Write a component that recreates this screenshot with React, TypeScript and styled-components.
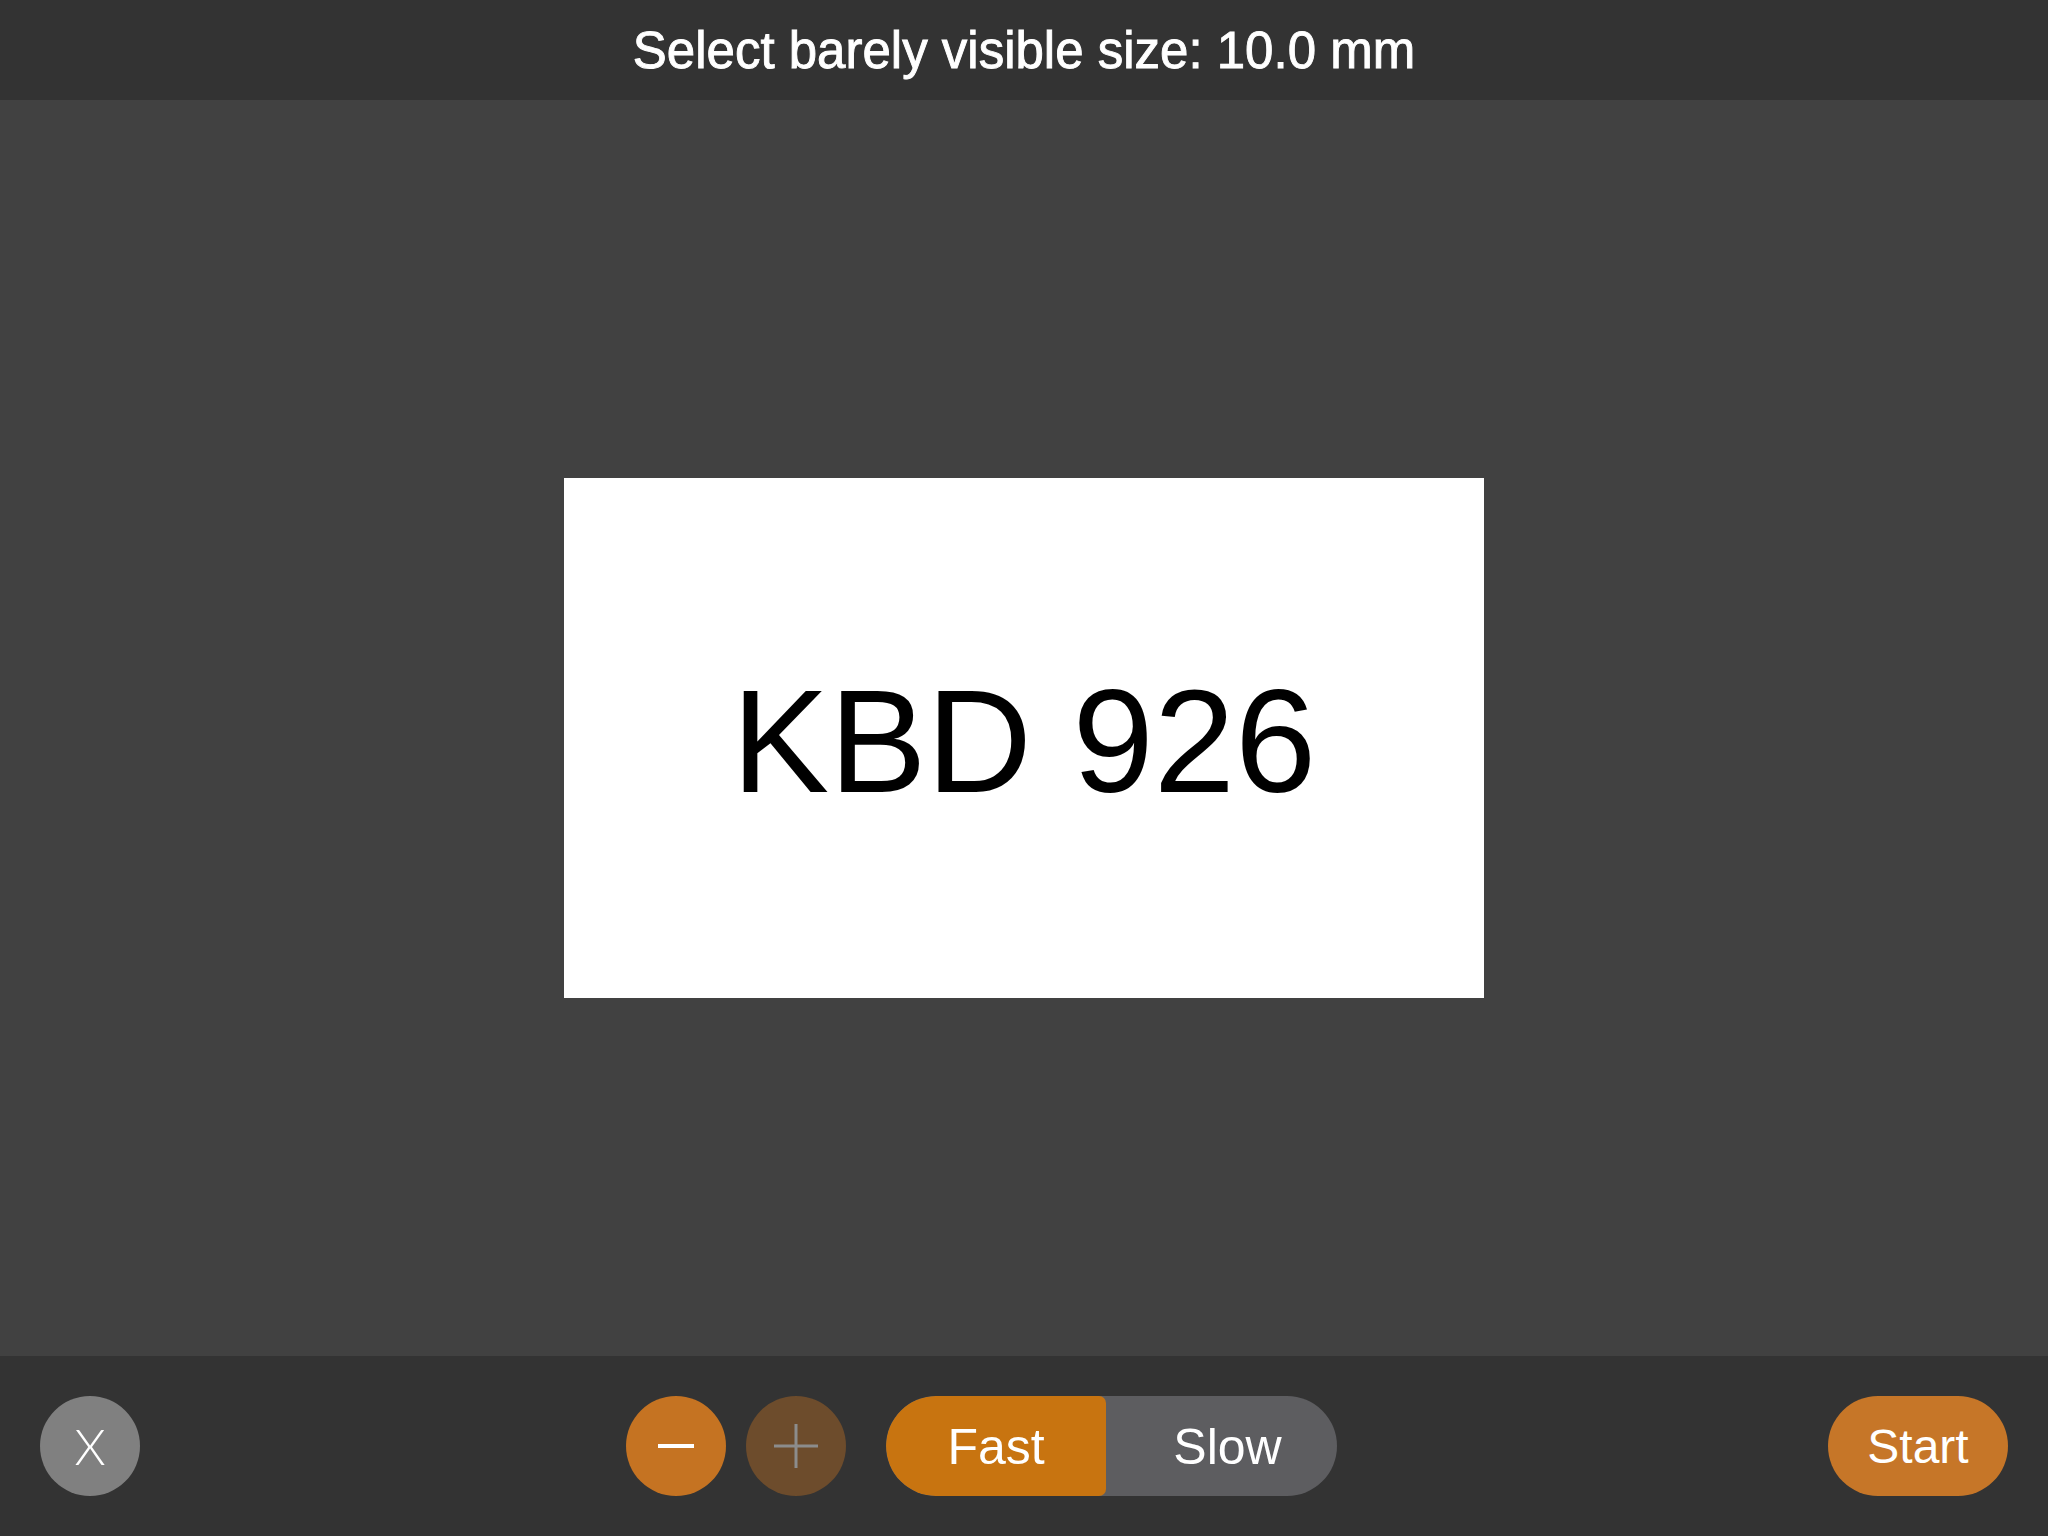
import React from "react";
import styled, { createGlobalStyle } from "styled-components";

const GlobalStyle = createGlobalStyle`
    html, body {
        margin: 0;
        padding: 0;
        background-color: #414141;
    }
    * {
        box-sizing: border-box;
    }
`;

const Screen = styled.div`
    width: 2048px;
    height: 1536px;
    display: flex;
    flex-direction: column;
    font-family: "Liberation Sans", Arial, sans-serif;
    color: white;
    overflow: hidden;
`;
const TopBar = styled.div`
    height: 100px;
    flex-shrink: 0;
    background-color: #333333;
    display: flex;
    align-items: center;
    justify-content: center;
    font-size: 51px;
    -webkit-text-stroke: 0.9px #ffffff;
`;
const Stage = styled.div`
    flex: 1;
    background-color: #414141;
    display: flex;
    align-items: flex-start;
    justify-content: center;
    padding-top: 378px;
`;
const Card = styled.div`
    width: 920px;
    height: 520px;
    background-color: #ffffff;
    color: #000000;
    display: flex;
    align-items: center;
    justify-content: center;
    font-size: 146px;
    padding-top: 8px;
`;
const BottomBar = styled.div`
    height: 180px;
    flex-shrink: 0;
    background-color: #333333;
    display: flex;
    align-items: center;
    padding: 0 40px;
`;
const RoundButton = styled.div<{ $bg: string }>`
    width: 100px;
    height: 100px;
    border-radius: 50%;
    background-color: ${(p) => p.$bg};
    display: flex;
    align-items: center;
    justify-content: center;
    flex-shrink: 0;
`;
const CloseLabel = styled.span`
    font-family: "Lato", "Liberation Sans", sans-serif;
    font-weight: 300;
    font-size: 50px;
    color: white;
    line-height: 1;
`;
const ZoomGroup = styled.div`
    display: flex;
    align-items: center;
    gap: 20px;
    margin-left: 486px;
`;
const Segmented = styled.div`
    display: flex;
    height: 100px;
    width: 451px;
    border-radius: 50px;
    background-color: #5d5d60;
    overflow: hidden;
    margin-left: 20px;
`;
const Segment = styled.div<{ $active?: boolean; $w: number }>`
    width: ${(p) => p.$w}px;
    height: 100%;
    display: flex;
    align-items: center;
    justify-content: center;
    font-size: 50px;
    padding-top: 2px;
    padding-left: ${(p) => (p.$active ? "0" : "12px")};
    background-color: ${(p) => (p.$active ? "#c87410" : "transparent")};
    border-radius: ${(p) => (p.$active ? "50px 7px 7px 50px" : "0")};
`;
const StartButton = styled.div`
    margin-left: auto;
    width: 180px;
    height: 100px;
    border-radius: 50px;
    background-color: #c67628;
    display: flex;
    align-items: center;
    justify-content: center;
    font-size: 48px;
`;

const MinusIcon = () => (
    <svg width="36" height="36" viewBox="0 0 36 36">
        <rect x="0" y="16" width="36" height="4" fill="#ffffff" />
    </svg>
);

const PlusIcon = () => (
    <svg width="44" height="44" viewBox="0 0 44 44">
        <rect x="0" y="20.5" width="44" height="3" fill="#8c8c8c" />
        <rect x="20.5" y="0" width="3" height="44" fill="#8c8c8c" />
    </svg>
);

const App = () => {
    return (
        <Screen>
            <GlobalStyle />
            <TopBar>Select barely visible size: 10.0 mm</TopBar>
            <Stage>
                <Card>KBD 926</Card>
            </Stage>
            <BottomBar>
                <RoundButton $bg="#808080">
                    <CloseLabel>X</CloseLabel>
                </RoundButton>
                <ZoomGroup>
                    <RoundButton $bg="#c57322">
                        <MinusIcon />
                    </RoundButton>
                    <RoundButton $bg="#6d4c2c">
                        <PlusIcon />
                    </RoundButton>
                    <Segmented>
                        <Segment $active $w={220}>Fast</Segment>
                        <Segment $w={231}>Slow</Segment>
                    </Segmented>
                </ZoomGroup>
                <StartButton>Start</StartButton>
            </BottomBar>
        </Screen>
    );
};
export default App;
